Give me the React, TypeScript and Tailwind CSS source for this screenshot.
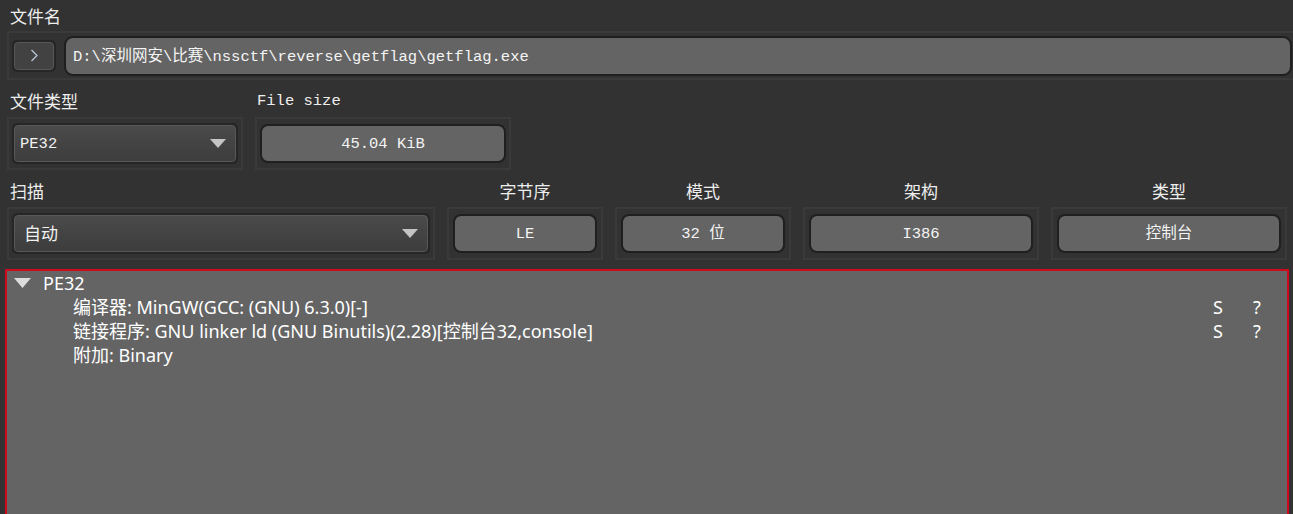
import { ReactNode } from 'react';

const sans = 'font-["Noto_Sans","Noto_Sans_CJK_SC",sans-serif]';
const mono = 'font-["Liberation_Mono","Noto_Sans_CJK_SC",monospace]';

function Frame({ className, children }: { className?: string; children: ReactNode }) {
    return (
        <div className={`border-2 border-[#3a3a3a] flex items-center ${className ?? ''}`}>
            {children}
        </div>
    );
}

function ValueBox({ text }: { text: string }) {
    return (
        <div className={`flex-1 h-[39px] rounded-[8px] bg-[#646464] border-2 border-[#1f1f1f] flex items-center justify-center pt-[2px] text-[15.5px] text-[#f4f4f4] ${mono}`}>
            {text}
        </div>
    );
}

function Combo({ text, textClass }: { text: string; textClass: string }) {
    return (
        <div className="flex-1 h-[41px] rounded-[5px] border-2 border-[#262626] bg-[#262626]">
            <div className="h-full rounded-[4px] border border-[#585858] bg-gradient-to-b from-[#4a4a4a] to-[#3d3d3d] flex items-center justify-between pl-[5px] pr-[9px]">
                <span className={textClass}>{text}</span>
                <svg width="16" height="9" viewBox="0 0 16 9">
                    <path d="M0 0 H16 L8 9 Z" fill="#c4c4c4" />
                </svg>
            </div>
        </div>
    );
}

function Label({ children, className }: { children: ReactNode; className?: string }) {
    return <div className={`h-[37px] flex items-center pt-[7px] text-[17px] text-[#eeeeee] ${className ?? ''}`}>{children}</div>;
}

export default function App() {
    return (
        <div className={`w-[1293px] h-[514px] overflow-hidden bg-[#323232] ${sans}`}>
            {/* file name */}
            <div className="h-[31px] pl-[10px] pt-[4px] text-[17px] text-[#eeeeee]">文件名</div>
            <Frame className="ml-[7px] w-[1300px] h-[49px] pl-[3px] gap-[8px]">
                <div className="w-[44px] h-[32px] rounded-[5px] border-2 border-[#262626] bg-[#262626]">
                    <div className="h-full rounded-[4px] border border-[#575757] bg-[#424242] flex items-center justify-center">
                        <svg width="9" height="13" viewBox="0 0 9 13">
                            <path d="M1.5 1 L7 6.5 L1.5 12" fill="none" stroke="#b8c4d8" strokeWidth="1.3" />
                        </svg>
                    </div>
                </div>
                <div className={`w-[1228px] h-[40px] rounded-[9px] bg-[#646464] border-2 border-[#1f1f1f] flex items-center pl-[7px] pt-[4px] text-[15.5px] text-[#f4f4f4] ${mono}`}>
                    D:\深圳网安\比赛\nssctf\reverse\getflag\getflag.exe
                </div>
            </Frame>

            {/* type / size */}
            <div className="flex gap-[12px] pl-[7px]">
                <div className="w-[236px]">
                    <Label className="pl-[3px]">文件类型</Label>
                    <Frame className="h-[53px] px-[3px]">
                        <Combo text="PE32" textClass={`pt-[2px] text-[15.5px] text-[#f2f2f2] ${mono}`} />
                    </Frame>
                </div>
                <div className="w-[256px]">
                    <Label className={`pl-[2px] !text-[15.5px] ${mono}`}>File size</Label>
                    <Frame className="h-[53px] px-[3px]">
                        <ValueBox text="45.04 KiB" />
                    </Frame>
                </div>
            </div>

            {/* scan row */}
            <div className="flex gap-[12px] pl-[7px]">
                <div className="w-[428px]">
                    <Label className="pl-[3px]">扫描</Label>
                    <Frame className="h-[53px] px-[3px]">
                        <Combo text="自动" textClass="text-[17px] text-[#f2f2f2] pl-[4px]" />
                    </Frame>
                </div>
                {[
                    { label: '字节序', value: 'LE', w: 'w-[156px]' },
                    { label: '模式', value: '32 位', w: 'w-[176px]' },
                    { label: '架构', value: 'I386', w: 'w-[236px]' },
                    { label: '类型', value: '控制台', w: 'w-[236px]' },
                ].map((c) => (
                    <div key={c.label} className={c.w}>
                        <Label className="justify-center">{c.label}</Label>
                        <Frame className="h-[53px] px-[4px]">
                            <ValueBox text={c.value} />
                        </Frame>
                    </div>
                ))}
            </div>

            {/* result tree */}
            <div className="mt-[9px] ml-[5px] w-[1284px] h-[260px] border-2 border-[#d0081c] bg-[#646464] text-[18px] text-white">
                <div className="h-[24px] flex items-center">
                    <svg className="ml-[7px] mr-[12px]" width="17" height="10" viewBox="0 0 17 10">
                        <path d="M0 0 H17 L8.5 10 Z" fill="#dcdcdc" />
                    </svg>
                    <span>PE32</span>
                </div>
                {[
                    { text: '编译器: MinGW(GCC: (GNU) 6.3.0)[-]', s: true },
                    { text: '链接程序: GNU linker ld (GNU Binutils)(2.28)[控制台32,console]', s: true },
                    { text: '附加: Binary', s: false },
                ].map((r) => (
                    <div key={r.text} className="h-[24px] flex items-center pl-[66px]">
                        <span className="flex-1">{r.text}</span>
                        {r.s && (
                            <>
                                <span className="w-[40px]">S</span>
                                <span className="w-[34px]">?</span>
                            </>
                        )}
                    </div>
                ))}
            </div>
        </div>
    );
}
